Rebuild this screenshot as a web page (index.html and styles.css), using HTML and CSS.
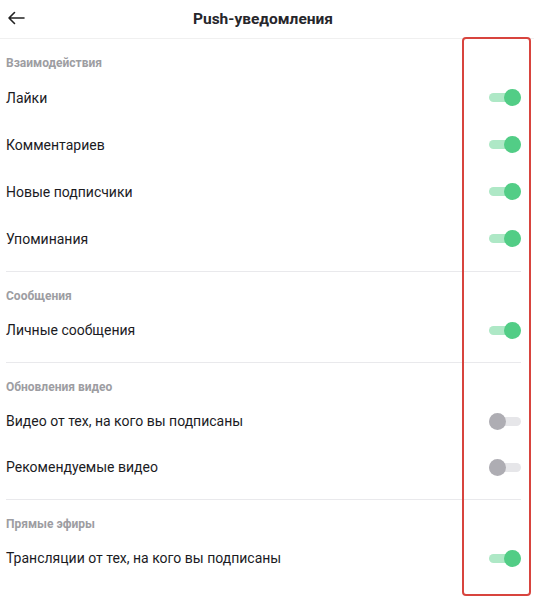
FILE: index.html
```html
<!DOCTYPE html>
<html>
<head>
  <title>Push-уведомления</title>
  <meta http-equiv="Content-Type" content="text/html;charset=utf-8" />
  <meta name="viewport" content="width=device-width">
  <link rel="stylesheet" href="styles.css">
</head>
<body>
  <div class="topbar">
    <span class="back">
      <svg width="18" height="14" viewBox="0 0 18 14">
        <path d="M17 7H2M7.5 1.5L2 7l5.5 5.5" fill="none" stroke="#222" stroke-width="1.6" stroke-linecap="round" stroke-linejoin="round"/>
      </svg>
    </span>
    <h1>Push-уведомления</h1>
  </div>

  <div class="list">
    <div class="highlight"></div>
    <div class="group first">
      <div class="grouptitle">Взаимодействия</div>
      <div class="row"><span>Лайки</span><i class="switch on"></i></div>
      <div class="row"><span>Комментариев</span><i class="switch on"></i></div>
      <div class="row"><span>Новые подписчики</span><i class="switch on"></i></div>
      <div class="row"><span>Упоминания</span><i class="switch on"></i></div>
    </div>
    <div class="group">
      <div class="grouptitle">Сообщения</div>
      <div class="row"><span>Личные сообщения</span><i class="switch on"></i></div>
    </div>
    <div class="group">
      <div class="grouptitle">Обновления видео</div>
      <div class="row"><span>Видео от тех, на кого вы подписаны</span><i class="switch"></i></div>
      <div class="row"><span>Рекомендуемые видео</span><i class="switch"></i></div>
    </div>
    <div class="group">
      <div class="grouptitle">Прямые эфиры</div>
      <div class="row"><span>Трансляции от тех, на кого вы подписаны</span><i class="switch on"></i></div>
    </div>
  </div>
</body>
</html>
```

FILE: styles.css
```css
body {
  margin: 0;
  background: #fff;
  font-family: Roboto, "Noto Sans", sans-serif;
  color: #1b1b1f;
}
.topbar {
  position: relative;
  height: 38px;
  border-bottom: 1px solid #f0f0f0;
  display: flex;
  align-items: center;
  justify-content: center;
  padding-right: 8px;
}
.topbar .back {
  position: absolute;
  left: 7px;
  top: 10px;
}
.topbar h1 {
  margin: 0;
  font-size: 15.5px;
  font-weight: bold;
  color: #26262b;
}
.list {
  position: relative;
  padding: 0 0 40px 6px;
}
.group {
  margin-right: 13px;
  border-bottom: 1px solid #e9e9ec;
  padding: 13px 0 9px 0;
}
.group:last-child { border-bottom: 0; }
.grouptitle {
  font-size: 12px;
  font-weight: bold;
  color: #9d9da2;
  height: 22px;
  line-height: 22px;
}
.row {
  height: 46px;
  display: flex;
  align-items: center;
  justify-content: space-between;
  font-size: 14px;
}
.group.first .row { height: 47px; }
.switch {
  position: relative;
  width: 32px;
  height: 9px;
  border-radius: 5px;
  background: #e6e6e9;
}
.switch::after {
  content: "";
  position: absolute;
  top: -4px;
  left: 0;
  width: 17px;
  height: 17px;
  border-radius: 50%;
  background: #aeadb3;
}
.switch.on { background: #aee8c6; }
.switch.on::after {
  left: auto;
  right: 0;
  background: #52cd86;
}
.highlight {
  position: absolute;
  left: 462px;
  top: -2px;
  width: 65px;
  height: 555px;
  border: 2px solid #d8443e;
  border-radius: 4px;
}
```
